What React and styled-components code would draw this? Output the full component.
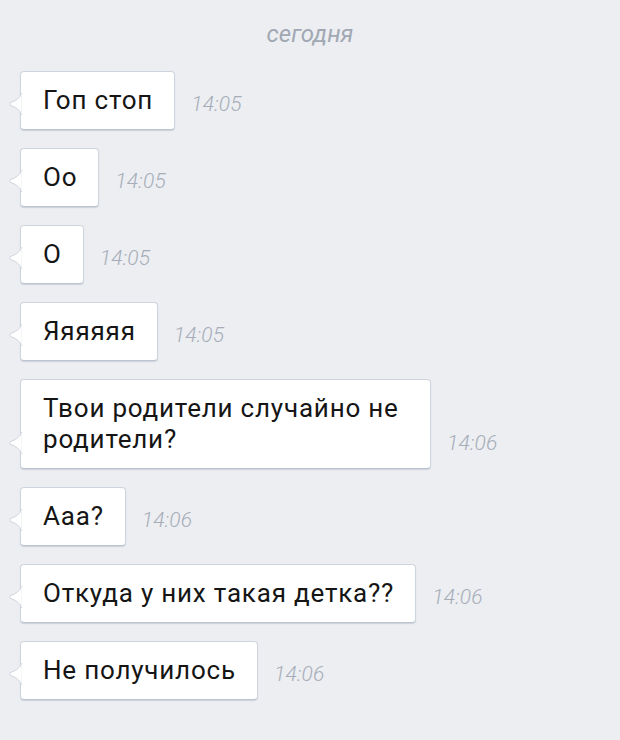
import React from "react";
import styled, { createGlobalStyle } from "styled-components";

const Global = createGlobalStyle`
  html, body { margin: 0; padding: 0; background: #eceef2; }
  body { font-family: Roboto, "Noto Sans", sans-serif; }
`;

const Page = styled.div`
  width: 620px;
  height: 740px;
  box-sizing: border-box;
  background: #eceef2;
  padding: 19px 0 0 20px;
  overflow: hidden;
  display: flex;
  flex-direction: column;
`;

const DateLabel = styled.div`
  align-self: center;
  margin-left: -20px;
  font-style: italic;
  font-size: 24px;
  line-height: 30px;
  color: #a1a8b3;
  margin-bottom: 22px;
`;

const List = styled.div`
  display: flex;
  flex-direction: column;
  gap: 18px;
`;

const Row = styled.div`
  display: flex;
  align-items: flex-end;
  gap: 16px;
`;

const Bubble = styled.div`
  position: relative;
  max-width: 366px;
  background: #fff;
  border: 1px solid #cfd5de;
  border-bottom-color: #bcc4cf;
  border-radius: 4px;
  padding: 13px 21px 13px 22px;
  font-size: 26px;
  letter-spacing: 0.8px;
  line-height: 31px;
  color: #151515;
  box-shadow: 0 1px 1px rgba(150, 160, 175, 0.35);
`;

const TailSvg = styled.svg`
  position: absolute;
  left: -13px;
  bottom: 14px;
  width: 15px;
  height: 22px;
  overflow: visible;
`;

const Time = styled.span`
  font-style: italic;
  font-weight: 300;
  font-size: 21px;
  letter-spacing: 0.2px;
  line-height: 26px;
  color: #a6adb8;
  padding-bottom: 13px;
`;

const Tail = () => (
  <TailSvg viewBox="0 0 15 22">
    <path d="M14 0 Q11 7 2.5 9.5 Q1 11 2.5 12.5 Q11 15 14 22 Z" fill="#fff" stroke="#cfd5de" strokeWidth="1" />
    <rect x="13.5" y="0.5" width="2" height="21" fill="#fff" />
  </TailSvg>
);

const messages = [
  { text: "Гоп стоп", time: "14:05" },
  { text: "Оо", time: "14:05" },
  { text: "О", time: "14:05" },
  { text: "Яяяяяя", time: "14:05" },
  { text: "Твои родители случайно не родители?", time: "14:06" },
  { text: "Ааа?", time: "14:06" },
  { text: "Откуда у них такая детка??", time: "14:06" },
  { text: "Не получилось", time: "14:06" },
];

export default function App() {
  return (
    <>
      <Global />
      <Page>
        <DateLabel>сегодня</DateLabel>
        <List>
          {messages.map((m, i) => (
            <Row key={i}>
              <Bubble>
                <Tail />
                {m.text}
              </Bubble>
              <Time>{m.time}</Time>
            </Row>
          ))}
        </List>
      </Page>
    </>
  );
}
